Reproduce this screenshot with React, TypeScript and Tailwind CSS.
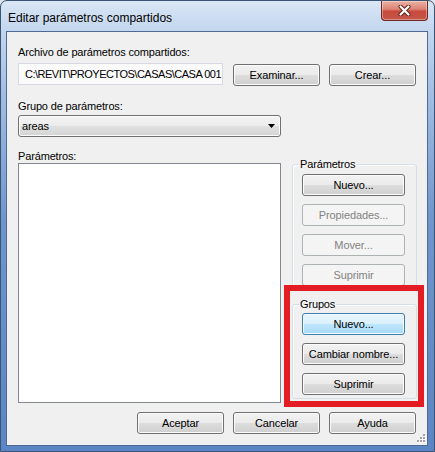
import React from "react";

type BtnProps = {
  children: React.ReactNode;
  w: string;
  disabled?: boolean;
  focused?: boolean;
  className?: string;
};

function Btn({ children, w, disabled, focused, className = "" }: BtnProps) {
  let look =
    "border-[#707070] bg-[linear-gradient(180deg,#f2f2f2_0%,#ebebeb_48%,#dddddd_52%,#cfcfcf_100%)] text-black shadow-[inset_0_0_0_1px_#fcfcfc]";
  if (disabled) look = "border-[#adb2b5] bg-[#f4f4f4] text-[#838383]";
  if (focused)
    look =
      "border-[#3c7fb1] bg-[linear-gradient(180deg,#eaf6fd_0%,#d9f0fc_48%,#bee6fd_52%,#a7d9f5_100%)] text-black shadow-[inset_0_0_0_1px_#f4fbff]";
  return (
    <button
      type="button"
      className={`${w} h-[22px] shrink-0 flex items-center justify-center rounded-[3px] border ${look} text-[11px] leading-[14px] tracking-[-0.1px] ${className}`}
    >
      {children}
    </button>
  );
}

function CloseX() {
  return (
    <svg width="13" height="11" viewBox="0 0 13 11">
      <path d="M2.5 1.5 L10.5 9.5 M10.5 1.5 L2.5 9.5" stroke="#5a1f17" strokeWidth="4" strokeLinecap="round" />
      <path d="M2.5 1.5 L10.5 9.5 M10.5 1.5 L2.5 9.5" stroke="#ffffff" strokeWidth="2.2" strokeLinecap="round" />
    </svg>
  );
}

function Grip() {
  const dots: [number, number][] = [
    [7, 1],
    [4, 4],
    [7, 4],
    [1, 7],
    [4, 7],
    [7, 7],
  ];
  return (
    <svg width="10" height="10" viewBox="0 0 10 10">
      {dots.map(([x, y], i) => (
        <g key={i}>
          <rect x={x + 1} y={y + 1} width="2" height="2" fill="#ffffff" />
          <rect x={x} y={y} width="2" height="2" fill="#a3a3a3" />
        </g>
      ))}
    </svg>
  );
}

export default function App() {
  return (
    <div className="w-[435px] h-[452px] bg-[#dfe4ea] font-['Liberation_Sans',Arial,sans-serif] text-black">
      <div className="w-[435px] h-[452px] flex flex-col rounded-t-[7px] border border-[#3b5473] bg-[linear-gradient(180deg,#d9e6f5_0px,#c3d6ee_30px,#a3bfe4_90px,#6f95cc_220px,#5b85c4_452px)]">
        {/* Title bar */}
        <div className="h-[30px] shrink-0 flex items-start justify-between">
          <div className="pl-[7px] pt-[9px] text-[12px] leading-[16px] text-black">
            Editar parámetros compartidos
          </div>
          <div className="mr-[6px] w-[47px] h-[20px] flex items-center justify-center rounded-b-[4px] border border-t-0 border-[#6e2a22] bg-[linear-gradient(180deg,#eab1a3_0%,#dc8676_42%,#c74a3c_55%,#c4584a_100%)] shadow-[inset_0_0_0_1px_rgba(255,255,255,0.35)]">
            <CloseX />
          </div>
        </div>

        {/* Client area */}
        <div className="flex px-[5px]">
          <div className="relative w-[422px] h-[415px] border border-[#4f6b93] bg-[#f0f0f0] text-[11px] leading-[14px] tracking-[-0.15px]">
            <div className="pl-[11px] pt-[13px] flex flex-col">
              <div>Archivo de parámetros compartidos:</div>

              <div className="mt-[4px] flex items-start">
                <div className="w-[205px] h-[22px] border border-[#d6d9df] bg-[#fbfbfb] pl-[6px] flex items-center overflow-hidden whitespace-nowrap tracking-[-0.5px]">
                  {"C:\\REVIT\\PROYECTOS\\CASAS\\CASA 001"}
                </div>
                <Btn w="w-[87px]" className="ml-[10px] mt-[1px]">
                  Examinar...
                </Btn>
                <Btn w="w-[87px]" className="ml-[9px] mt-[1px]">
                  Crear...
                </Btn>
              </div>

              <div className="mt-[13px]">Grupo de parámetros:</div>

              <div className="mt-[2px] w-[263px] h-[22px] flex items-center justify-between rounded-[3px] border border-[#707070] bg-[linear-gradient(180deg,#f4f4f4_0%,#ececec_48%,#e0e0e0_52%,#d4d4d4_100%)] shadow-[inset_0_0_0_1px_#fcfcfc] pl-[3px] pr-[5px]">
                <span>areas</span>
                <svg width="7" height="4" viewBox="0 0 7 4">
                  <path d="M0 0 H7 L3.5 4 Z" fill="#000" />
                </svg>
              </div>

              <div className="mt-[12px] flex items-start">
                <div className="w-[263px] flex flex-col">
                  <div>Parámetros:</div>
                  <div className="h-[240px] border border-[#828790] bg-white" />
                </div>

                <div className="ml-[11px] mt-[8px] w-[125px] flex flex-col">
                  <fieldset className="m-0 p-0 border border-[#d5dfe5] rounded-[3px] shadow-[inset_1px_1px_0_#ffffff]">
                    <legend className="ml-[6px] px-[1px] leading-[14px]">Parámetros</legend>
                    <div className="pl-[9px] pb-[4px] flex flex-col">
                      <Btn w="w-[103px]" className="mt-[3px]">
                        Nuevo...
                      </Btn>
                      <Btn w="w-[103px]" disabled className="mt-[8px]">
                        Propiedades...
                      </Btn>
                      <Btn w="w-[103px]" disabled className="mt-[8px]">
                        Mover...
                      </Btn>
                      <Btn w="w-[103px]" disabled className="mt-[8px]">
                        Suprimir
                      </Btn>
                    </div>
                  </fieldset>

                  <fieldset className="mt-[6px] m-0 p-0 border border-[#d5dfe5] rounded-[3px] shadow-[inset_1px_1px_0_#ffffff]">
                    <legend className="ml-[6px] px-[1px] leading-[14px]">Grupos</legend>
                    <div className="pl-[9px] pb-[3px] flex flex-col">
                      <Btn w="w-[103px]" focused className="mt-[2px]">
                        Nuevo...
                      </Btn>
                      <Btn w="w-[103px]" className="mt-[8px]">
                        Cambiar nombre...
                      </Btn>
                      <Btn w="w-[103px]" className="mt-[8px]">
                        Suprimir
                      </Btn>
                    </div>
                  </fieldset>
                </div>
              </div>

              <div className="mt-[9px] pr-[11px] flex justify-end gap-[9px]">
                <Btn w="w-[87px]">Aceptar</Btn>
                <Btn w="w-[87px]">Cancelar</Btn>
                <Btn w="w-[87px]">Ayuda</Btn>
              </div>
            </div>

            {/* annotation highlight */}
            <div className="absolute left-[277px] top-[253px] w-[140px] h-[122px] border-[6px] border-[#e41d25] pointer-events-none" />

            {/* size grip */}
            <div className="absolute right-[1px] bottom-[2px]">
              <Grip />
            </div>
          </div>
        </div>
      </div>
    </div>
  );
}
